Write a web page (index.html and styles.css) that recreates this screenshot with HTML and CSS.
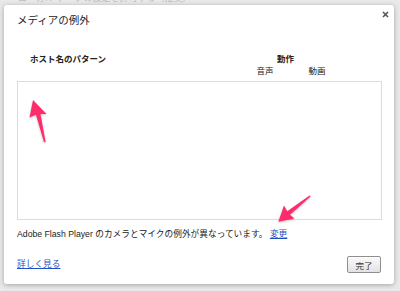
FILE: index.html
```html
<!DOCTYPE html>
<html lang="ja">

<head>
	<meta charset="UTF-8">
	<meta name="viewport" content="width=device-width, initial-scale=1.0">
	<title>メディアの例外</title>
	<link rel="stylesheet" href="styles.css">
</head>

<body>
	<!-- settings page behind the overlay -->
	<div class="page">
		<div class="page-row">ローカル データの設定を許可する（推奨）</div>
	</div>

	<div class="overlay">
		<div class="dialog">
			<h1 class="dialog-title">メディアの例外</h1>
			<button class="close-btn" type="button" aria-label="閉じる">
				<svg width="7" height="7" viewBox="0 0 7 7">
					<path d="M1 1 L6 6 M6 1 L1 6" />
				</svg>
			</button>

			<div class="list-header">
				<div class="col-name">ホスト名のパターン</div>
				<div class="col-action">
					<div class="action-title">動作</div>
					<div class="action-sub">
						<span>音声</span>
						<span>動画</span>
					</div>
				</div>
			</div>

			<div class="exception-list"></div>

			<p class="flash-note">Adobe Flash Player のカメラとマイクの例外が異なっています。 <a href="#">変更</a></p>

			<div class="dialog-footer">
				<a href="#" class="learn-more">詳しく見る</a>
				<button class="done-btn" type="button">完了</button>
			</div>
		</div>
	</div>

	<!-- annotation arrows -->
	<svg class="annotations" width="400" height="291" viewBox="0 0 400 291">
		<polygon points="33,100 46.5,114 40.5,114 45.6,142 44,142.3 36,114.8 29.5,117.5" />
		<polygon points="278.3,221.7 284,205.5 287.3,211.3 309.6,195.4 310.6,196.6 290,214.8 294.5,218.6" />
	</svg>
</body>

</html>
```

FILE: styles.css
```css
/* Base reset */
* {
	margin: 0;
	padding: 0;
	box-sizing: border-box;
	font-family: 'Liberation Sans', 'Noto Sans CJK JP', sans-serif;
}

body {
	width: 400px;
	height: 291px;
	overflow: hidden;
	background: #e9e9e9;
	color: #222;
}

.page {
	padding: 0 18px;
}

.page-row {
	margin-top: -8px;
	font-size: 9px;
	line-height: 12px;
	color: #bcbcbc;
}

.overlay {
	position: absolute;
	top: 5px;
	left: 4px;
}

.dialog {
	position: relative;
	display: flex;
	flex-direction: column;
	width: 390px;
	height: 279px;
	padding: 8px 13px 11px;
	background: #fff;
	border-radius: 3px;
	box-shadow: 0 1px 5px rgba(0, 0, 0, 0.3);
}

.dialog-title {
	font-size: 10.5px;
	line-height: 14px;
	font-weight: normal;
	color: #222;
}

.close-btn {
	position: absolute;
	top: 6px;
	right: 5px;
	width: 7px;
	height: 7px;
	border: none;
	background: none;
	cursor: pointer;
}

.close-btn svg {
	display: block;
	stroke: #555;
	stroke-width: 1.6;
}

.list-header {
	display: flex;
	margin-top: 25.5px;
	font-size: 8.5px;
	line-height: 12px;
}

.col-name {
	flex: 1;
	padding-left: 13px;
	font-weight: bold;
}

.col-action {
	width: 104px;
	margin-right: 38px;
}

.action-title {
	padding-left: 38px;
	font-weight: bold;
}

.action-sub {
	display: flex;
	margin-top: 0.5px;
}

.action-sub span {
	width: 52px;
	text-align: center;
}

.exception-list {
	height: 139px;
	margin-top: 4px;
	margin-right: -1px;
	border: 1px solid #dcdcdc;
}

.flash-note {
	margin-top: 8px;
	font-size: 8.7px;
	line-height: 12px;
	color: #222;
}

a {
	color: #1f4ec6;
}

.dialog-footer {
	display: flex;
	align-items: center;
	justify-content: space-between;
	margin-top: 16px;
}

.learn-more {
	font-size: 8.7px;
	line-height: 12px;
	margin-top: -2px;
}

.done-btn {
	width: 34px;
	height: 17px;
	border: 1px solid #8e8e8e;
	border-radius: 2px;
	background: linear-gradient(#fafafa, #e3e3e3);
	box-shadow: inset 0 1px 0 #fff;
	font-size: 8.5px;
	color: #333;
	cursor: pointer;
}

.annotations {
	position: absolute;
	top: 0;
	left: 0;
	fill: #fd2d6c;
	filter: drop-shadow(0 1px 1px rgba(0, 0, 0, 0.25));
}
```
